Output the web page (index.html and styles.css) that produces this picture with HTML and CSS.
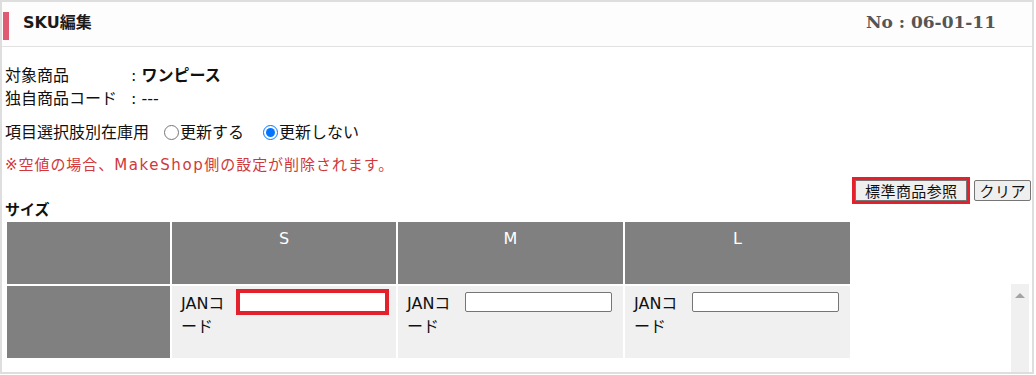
FILE: index.html
```html
<!DOCTYPE html>
<html lang="ja">
<head>
<meta charset="utf-8">
<title>SKU編集</title>
<link rel="stylesheet" href="styles.css">
</head>
<body>
<div class="panel">
  <div class="panel-head">
    <span class="accent"></span>
    <h1 class="title">SKU編集</h1>
    <span class="number">No : 06-01-11</span>
  </div>
  <div class="info">
    <div class="row"><span class="label">対象商品</span>: <b>ワンピース</b></div>
    <div class="row"><span class="label">独自商品コード</span>: ---</div>
    <div class="radio-row">
      <span>項目選択肢別在庫用</span>
      <input type="radio" name="upd" class="radio first">
      <span>更新する</span>
      <input type="radio" name="upd" class="radio second" checked>
      <span>更新しない</span>
    </div>
    <div class="warning">※空値の場合、<span class="latin">MakeShop</span>側の設定が削除されます。</div>
    <div class="actions">
      <button class="btn btn-marked">標準商品参照</button><button class="btn btn-clear">クリア</button>
    </div>
    <div class="group-label">サイズ</div>
  </div>
  <div class="grid-area">
    <table class="sku-table">
      <colgroup>
        <col class="c0"><col class="c1"><col class="c2"><col class="c3">
      </colgroup>
      <tr>
        <th class="head blank"></th>
        <th class="head">S</th>
        <th class="head">M</th>
        <th class="head">L</th>
      </tr>
      <tr>
        <td class="side"></td>
        <td class="cell"><div class="field"><span class="flabel">JANコード</span><input type="text" class="jan marked"></div></td>
        <td class="cell"><div class="field"><span class="flabel">JANコード</span><input type="text" class="jan"></div></td>
        <td class="cell"><div class="field"><span class="flabel">JANコード</span><input type="text" class="jan"></div></td>
      </tr>
    </table>
    <div class="scrollbar"><span class="arrow"></span></div>
  </div>
</div>
</body>
</html>
```

FILE: styles.css
```css
html, body {
  margin: 0;
  padding: 0;
  background: #ffffff;
}

body {
  font-family: "DejaVu Sans", "Noto Sans CJK JP", sans-serif;
  font-size: 16px;
  line-height: 23px;
  color: #111;
}

.panel {
  width: 1034px;
  height: 374px;
  box-sizing: border-box;
  border: 2px solid #dedede;
  display: flex;
  flex-direction: column;
  overflow: hidden;
}

.panel-head {
  height: 45px;
  box-sizing: border-box;
  border-bottom: 1px solid #e2e2e2;
  background: #fdfdfd;
  display: flex;
  align-items: center;
  padding-bottom: 3px;
}

.accent {
  align-self: flex-start;
  width: 6px;
  height: 28px;
  margin: 10px 0 0 1px;
  background: #e05a73;
}

.title {
  margin: 0 0 0 14px;
  font-size: 16px;
  font-weight: bold;
  color: #1a1a1a;
  flex: 1;
}

.number {
  font-family: "DejaVu Serif", serif;
  font-weight: bold;
  font-size: 17px;
  color: #555;
  margin-right: 36px;
}

.info {
  padding: 17px 0 0 3px;
}

.label {
  display: inline-block;
  width: 126px;
}

.row b {
  font-weight: bold;
}

.radio-row {
  display: flex;
  align-items: center;
  margin-top: 11px;
  height: 23px;
}

.radio {
  width: 15px;
  height: 15px;
  margin: 0 1px 0 15px;
}

.radio.second {
  margin-left: 19px;
}

.warning {
  margin-top: 10px;
  font-size: 15px;
  letter-spacing: 0.95px;
  color: #d0383c;
}

.latin {
  letter-spacing: 1.6px;
}

.actions {
  height: 24px;
  display: flex;
  justify-content: flex-end;
  align-items: flex-start;
  padding-right: 1px;
}

.btn {
  font-family: "Noto Sans CJK JP", sans-serif;
  font-size: 15px;
  line-height: 19px;
  height: 21px;
  margin-top: 3px;
  box-sizing: border-box;
  border: 1px solid #767676;
  border-radius: 2px;
  background: #efefef;
  color: #111;
  padding: 0 9px;
}

.btn-marked {
  border-radius: 0;
  outline: 3px solid #e3202b;
  outline-offset: 0;
  letter-spacing: 0.4px;
}

.btn-clear {
  margin-left: 7px;
  padding: 0 4px;
  letter-spacing: 0.5px;
}

.group-label {
  font-size: 15px;
  font-weight: bold;
  line-height: 19px;
  height: 19px;
}

.grid-area {
  flex: 1;
  display: flex;
  padding-left: 3px;
}

.sku-table {
  border-collapse: separate;
  border-spacing: 2px;
  table-layout: fixed;
  width: 847px;
  align-self: flex-start;
}

.c0 { width: 163px; }
.c1 { width: 224px; }
.c2 { width: 225px; }
.c3 { width: 225px; }

.head {
  height: 62px;
  box-sizing: border-box;
  background: #808080;
  color: #fff;
  font-weight: normal;
  font-size: 16px;
  line-height: 22px;
  text-align: center;
  vertical-align: top;
  padding: 6px 0 0;
}

.side {
  background: #808080;
  height: 72px;
  box-sizing: border-box;
  padding: 0;
}

.cell {
  background: #f0f0f0;
  height: 72px;
  box-sizing: border-box;
  vertical-align: top;
  padding: 6px 9px 0;
}

.field {
  display: flex;
  align-items: flex-start;
}

.flabel {
  width: 50px;
  font-size: 16px;
  line-height: 23px;
  word-break: break-all;
}

.jan {
  width: 147px;
  height: 20px;
  box-sizing: border-box;
  margin: 0 0 0 8px;
  border: 1px solid #767676;
  border-radius: 2px;
  background: #fff;
  padding: 0 3px;
}

.jan.marked {
  border-radius: 0;
  outline: 4px solid #e3202b;
  outline-offset: -1px;
}

.scrollbar {
  margin: 64px 3px 0 auto;
  width: 18px;
  background: #f0f0f0;
  display: flex;
  justify-content: center;
}

.arrow {
  margin-top: 9px;
  width: 0;
  height: 0;
  border-left: 5px solid transparent;
  border-right: 5px solid transparent;
  border-bottom: 5px solid #a3a3a3;
}
```
